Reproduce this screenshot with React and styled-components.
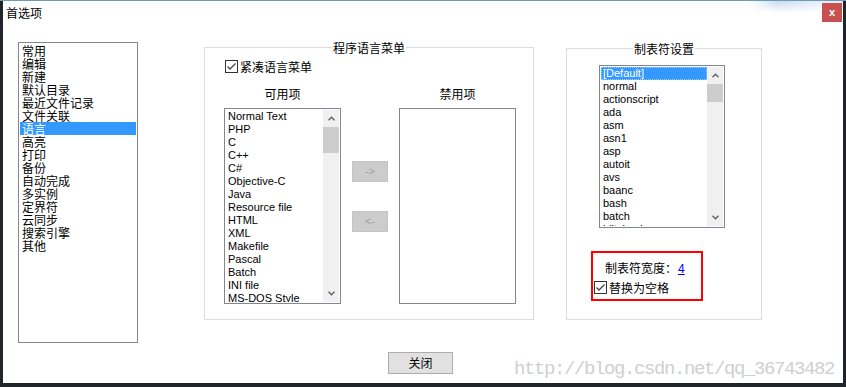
import React from 'react';
import styled, { createGlobalStyle } from 'styled-components';

const CJK = '"Noto Sans CJK SC", "Noto Sans", sans-serif';
const LATIN = '"Liberation Sans", Arial, sans-serif';

const GlobalStyle = createGlobalStyle`
  html, body { margin: 0; padding: 0; background: #1f2528; }
  #root { width: 846px; height: 387px; }
`;

const Desktop = styled.div`
  box-sizing: border-box;
  width: 846px;
  height: 387px;
  background: #1f2528;
  border-top: 1px solid #6b9db4;
  padding: 0 3px 4px 3px;
  display: flex;
`;

const Window = styled.div`
  position: relative;
  flex: 1;
  background: #fff;
  display: flex;
  flex-direction: column;
  font-family: ${CJK};
  font-size: 12px;
  line-height: 13px;
  color: #000;
  overflow: hidden;
`;

const TitleBar = styled.div`
  height: 24px;
  display: flex;
  align-items: flex-start;
  background:
    linear-gradient(to bottom, rgba(255,255,255,0) 0, #fff 12px),
    linear-gradient(to right, #fff 0, #fff 745px, #c9dbee 775px, #e6eef8 820px, #dfe8f3 100%);
`;

const Title = styled.div`
  padding: 5px 0 0 3px;
  font-size: 12px;
  line-height: 13px;
`;

const CloseButton = styled.div`
  margin: 2px 1px 0 auto;
  width: 20px;
  height: 19px;
  background: #c75050;
  color: #fff;
  font-family: ${LATIN};
  font-weight: bold;
  font-size: 11px;
  line-height: 18px;
  text-align: center;
`;

const Body = styled.div`
  display: flex;
  align-items: flex-start;
  margin-top: 16px;
  padding-left: 15px;
`;

const ListBox = styled.div`
  box-sizing: border-box;
  flex: none;
  width: ${p => p.$w}px;
  height: ${p => p.$h}px;
  margin-top: ${p => p.$mt || 0}px;
  margin-left: ${p => p.$ml || 0}px;
  border: 1px solid #828790;
  padding: 1px;
  background: #fff;
  display: flex;
  overflow: hidden;
`;

const ListItems = styled.div`
  flex: 1;
  min-width: 0;
  overflow: hidden;
`;

const ListItem = styled.div`
  position: relative;
  height: 13px;
  line-height: 13px;
  padding-left: 2px;
  white-space: nowrap;
  font-family: ${p => (p.$cjk ? CJK : LATIN)};
  font-size: ${p => (p.$cjk ? 12 : 11)}px;
  background: ${p => (p.$selected ? '#3399ff' : 'transparent')};
  color: ${p => (p.$selected ? '#fff' : '#000')};
  outline: ${p => (p.$focus ? '1px dotted #9fcbff' : 'none')};
  outline-offset: -1px;
`;

const ScrollBar = styled.div`
  flex: none;
  width: 16px;
  background: #f0f0f0;
  display: flex;
  flex-direction: column;
`;

const ScrollButton = styled.div`
  flex: none;
  height: 17px;
  display: flex;
  align-items: center;
  justify-content: center;
`;

const ScrollTrack = styled.div`
  flex: 1;
`;

const ScrollThumb = styled.div`
  height: ${p => p.$size}px;
  background: #cdcdcd;
`;

const GroupBox = styled.fieldset`
  box-sizing: border-box;
  flex: none;
  width: ${p => p.$width}px;
  margin: ${p => p.$top}px 0 0 ${p => p.$offset}px;
  padding: 0;
  min-width: 0;
  border: 1px solid #dcdcdc;
`;

const Legend = styled.legend`
  margin: 0 auto;
  padding: 0 1px;
  font-size: 12px;
  line-height: 13px;
`;

const CheckRow = styled.div`
  display: flex;
  align-items: center;
  gap: 2px;
  height: 13px;
  margin: ${p => p.$mt}px 0 0 ${p => p.$ml}px;
  white-space: nowrap;
`;

const ListsGrid = styled.div`
  display: grid;
  grid-template-columns: 117px 36px 117px;
  column-gap: 11px;
  row-gap: 8px;
  margin: 14px 0 15px 19px;
`;

const ColumnLabel = styled.div`
  text-align: center;
  line-height: 13px;
`;

const MoveButtons = styled.div`
  display: flex;
  flex-direction: column;
  gap: 29px;
  padding-top: 53px;
`;

const MoveButton = styled.div`
  box-sizing: border-box;
  width: 36px;
  height: 21px;
  background: #cccccc;
  border: 1px solid #c4c4c4;
  color: #a0a0a0;
  font-family: ${LATIN};
  font-size: 11px;
  line-height: 19px;
  text-align: center;
`;

const TabColumn = styled.div`
  display: flex;
  flex-direction: column;
  align-items: flex-start;
  padding: 10px 0 18px 0;
`;

const HighlightBox = styled.div`
  box-sizing: border-box;
  width: 112px;
  height: 50px;
  margin: 23px 0 0 24px;
  border: 2px solid #ff0000;
  padding-top: 8px;
  display: flex;
  flex-direction: column;
  gap: 5px;
`;

const WidthRow = styled.div`
  margin-left: 12px;
  white-space: nowrap;
  line-height: 13px;
`;

const Link = styled.span`
  color: #0000ff;
  text-decoration: underline;
  font-family: ${LATIN};
  font-size: 12px;
  margin-left: 1px;
`;

const Footer = styled.div`
  display: flex;
  justify-content: center;
  padding-right: 5px;
  margin-top: 9px;
`;

const DialogButton = styled.div`
  box-sizing: border-box;
  width: 65px;
  height: 22px;
  background: #e1e1e1;
  border: 1px solid #adadad;
  text-align: center;
  line-height: 20px;
  font-size: 12px;
`;

const Watermark = styled.div`
  position: absolute;
  left: 511px;
  top: 358px;
  font-family: "Liberation Mono", monospace;
  font-size: 19px;
  line-height: 20px;
  letter-spacing: -1.4px;
  color: #cfcfcf;
  white-space: nowrap;
  pointer-events: none;
`;

const Chevron = ({ dir }) => (
  <svg width="7" height="5" viewBox="0 0 7 5">
    <path
      d={dir === 'up' ? 'M0.5 4.3 L3.5 1.3 L6.5 4.3' : 'M0.5 0.7 L3.5 3.7 L6.5 0.7'}
      fill="none"
      stroke="#606060"
      strokeWidth="1.4"
    />
  </svg>
);

const CheckBox = () => (
  <svg width="13" height="13" viewBox="0 0 13 13" style={{ flex: 'none' }}>
    <rect x="0.5" y="0.5" width="12" height="12" fill="#fff" stroke="#333" />
    <path d="M2.5 6.5 L5 9 L10.5 3.5" fill="none" stroke="#444" strokeWidth="1.3" />
  </svg>
);

const Scroll = ({ thumb }) => (
  <ScrollBar>
    <ScrollButton><Chevron dir="up" /></ScrollButton>
    <ScrollTrack><ScrollThumb $size={thumb} /></ScrollTrack>
    <ScrollButton><Chevron dir="down" /></ScrollButton>
  </ScrollBar>
);

const categories = ['常用', '编辑', '新建', '默认目录', '最近文件记录', '文件关联', '语言', '高亮', '打印', '备份', '自动完成', '多实例', '定界符', '云同步', '搜索引擎', '其他'];
const languages = ['Normal Text', 'PHP', 'C', 'C++', 'C#', 'Objective-C', 'Java', 'Resource file', 'HTML', 'XML', 'Makefile', 'Pascal', 'Batch', 'INI file', 'MS-DOS Style'];
const tabLangs = ['[Default]', 'normal', 'actionscript', 'ada', 'asm', 'asn1', 'asp', 'autoit', 'avs', 'baanc', 'bash', 'batch', 'blitzbasic'];

export default function App() {
  return (
    <>
      <GlobalStyle />
      <Desktop>
        <Window>
          <TitleBar>
            <Title>首选项</Title>
            <CloseButton>x</CloseButton>
          </TitleBar>
          <Body>
            <ListBox $w={120} $h={301} $mt={1}>
              <ListItems>
                {categories.map(c => (
                  <ListItem key={c} $cjk $selected={c === '语言'}>{c}</ListItem>
                ))}
              </ListItems>
            </ListBox>

            <GroupBox $offset={66} $top={0} $width={330}>
              <Legend>程序语言菜单</Legend>
              <CheckRow $mt={6} $ml={20}>
                <CheckBox />
                <span>紧凑语言菜单</span>
              </CheckRow>
              <ListsGrid>
                <ColumnLabel>可用项</ColumnLabel>
                <span />
                <ColumnLabel>禁用项</ColumnLabel>
                <ListBox $w={117} $h={196}>
                  <ListItems>
                    {languages.map(l => <ListItem key={l}>{l}</ListItem>)}
                  </ListItems>
                  <Scroll thumb={26} />
                </ListBox>
                <MoveButtons>
                  <MoveButton>-&gt;</MoveButton>
                  <MoveButton>&lt;-</MoveButton>
                </MoveButtons>
                <ListBox $w={117} $h={196} />
              </ListsGrid>
            </GroupBox>

            <GroupBox $offset={32} $top={1} $width={196}>
              <Legend>制表符设置</Legend>
              <TabColumn>
                <ListBox $w={126} $h={163} $ml={32}>
                  <ListItems>
                    {tabLangs.map((l, i) => (
                      <ListItem key={l} $selected={i === 0} $focus={i === 0}>{l}</ListItem>
                    ))}
                  </ListItems>
                  <Scroll thumb={18} />
                </ListBox>
                <HighlightBox>
                  <WidthRow>制表符宽度：<Link>4</Link></WidthRow>
                  <CheckRow $mt={0} $ml={1}>
                    <CheckBox />
                    <span>替换为空格</span>
                  </CheckRow>
                </HighlightBox>
              </TabColumn>
            </GroupBox>
          </Body>
          <Footer>
            <DialogButton>关闭</DialogButton>
          </Footer>
          <Watermark>http://blog.csdn.net/qq_36743482</Watermark>
        </Window>
      </Desktop>
    </>
  );
}
